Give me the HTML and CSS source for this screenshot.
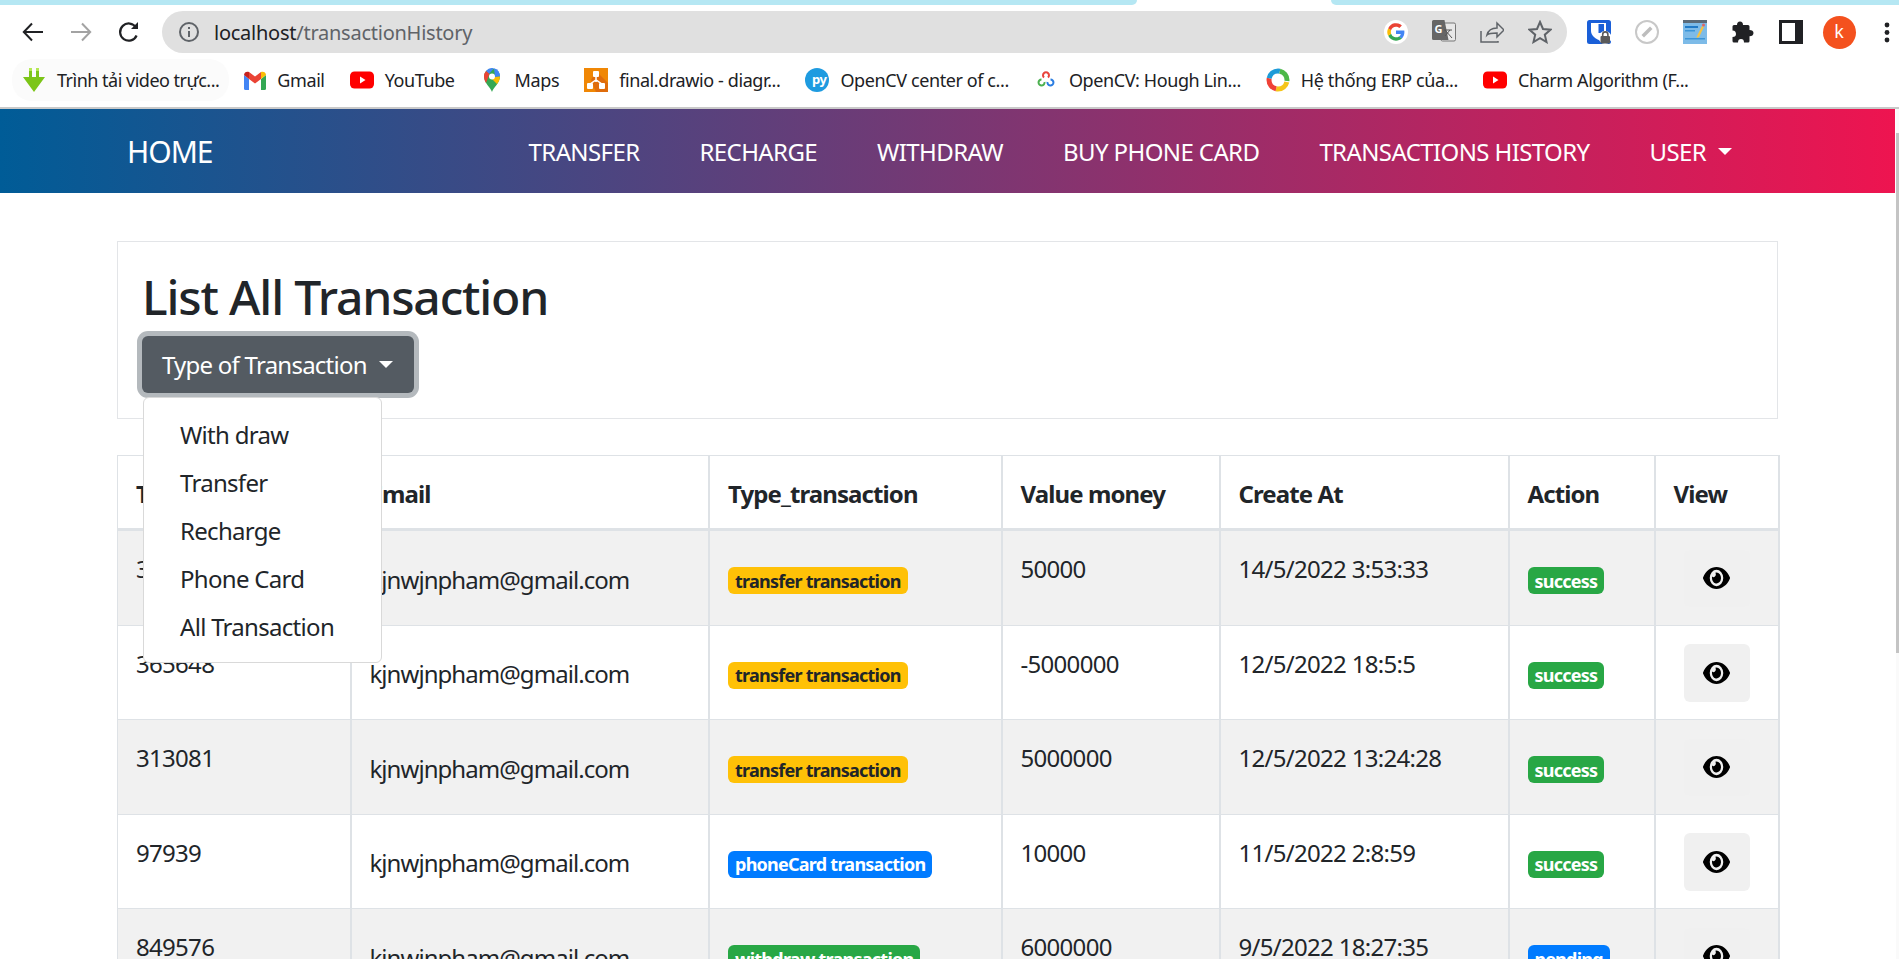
FILE: index.html
```html
<!DOCTYPE html>
<html lang="en">

<head>
    <meta charset="UTF-8">
    <meta name="viewport" content="width=device-width, initial-scale=1.0">
    <title>Transaction History</title>
    <link rel="stylesheet" href="styles.css">
</head>

<body>
    <svg class="defs" aria-hidden="true">
        <symbol id="eye" viewBox="0 64 576 384" preserveAspectRatio="none">
            <path d="M572.52 241.4C518.29 135.59 410.93 64 288 64S57.68 135.64 3.48 241.41a32.35 32.35 0 0 0 0 29.19C57.71 376.41 165.07 448 288 448s230.32-71.64 284.52-177.41a32.35 32.35 0 0 0 0-29.19zM288 400a144 144 0 1 1 144-144 143.93 143.93 0 0 1-144 144zm0-240a95.31 95.31 0 0 0-25.31 3.79 47.85 47.85 0 0 1-66.9 66.9A95.78 95.78 0 1 0 288 160z" />
        </symbol>
        <symbol id="yt" viewBox="0 0 24 24">
            <rect x="0" y="3.500" width="24" height="17" rx="4.500" fill="#f00" />
            <path d="M10 8.500v7l5.500-3.500z" fill="#fff" />
        </symbol>
    </svg>

    <!-- browser chrome -->
    <div class="tabstrip">
        <div class="tab-bg tab-bg-left"></div>
        <div class="tab-active"></div>
        <div class="tab-bg tab-bg-right"></div>
    </div>

    <div class="toolbar">
        <div class="tool-btn">
            <svg width="22" height="22" viewBox="0 0 22 22" fill="none" stroke="#202124" stroke-width="2"><path d="M21 11H2M10 2.500 1.800 11l8.200 8.500" /></svg>
        </div>
        <div class="tool-btn">
            <svg width="22" height="22" viewBox="0 0 22 22" fill="none" stroke="#a3a3a3" stroke-width="2"><path d="M1 11h19M12 2.500l8.200 8.500-8.200 8.500" /></svg>
        </div>
        <div class="tool-btn">
            <svg width="22" height="22" viewBox="0 0 22 22" fill="none" stroke="#202124" stroke-width="2.200"><path d="M18.600 14.500a8.600 8.600 0 1 1-.6-8" /><path d="M20 1v7h-7z" fill="#202124" stroke="none" /></svg>
        </div>

        <div class="address-bar">
            <svg class="info-icon" width="20" height="20" viewBox="0 0 20 20" fill="none" stroke="#5f6368" stroke-width="2"><circle cx="10" cy="10" r="9" /><path d="M10 9v6M10 5v2" /></svg>
            <div class="url"><span class="url-host">localhost</span>/transactionHistory</div>
            <div class="bar-icons">
                <svg width="24" height="24" viewBox="0 0 24 24"><circle cx="12" cy="12" r="12" fill="#fff" /><g transform="translate(-2.400 -2.400) scale(1.200)"><path d="M19 12.300c0-.6 0-1-.1-1.500H12v2.800h4a3.400 3.400 0 0 1-1.500 2.200l2.300 1.800c1.400-1.300 2.200-3.200 2.200-5.300z" fill="#4285f4" /><path d="M12 19.200c1.900 0 3.500-.6 4.800-1.700l-2.300-1.800a4.400 4.400 0 0 1-6.600-2.300L5.500 15.200a7.200 7.200 0 0 0 6.500 4z" fill="#34a853" /><path d="M7.900 13.400a4.400 4.400 0 0 1 0-2.800L5.500 8.800a7.200 7.200 0 0 0 0 6.400z" fill="#fbbc05" /><path d="M12 7.600c1.100 0 2 .4 2.800 1.100l2.100-2.100A7.200 7.200 0 0 0 5.500 8.800l2.400 1.800A4.300 4.300 0 0 1 12 7.600z" fill="#ea4335" /></g></svg>
                <svg width="24" height="24" viewBox="0 0 24 24"><rect x="9" y="3" width="14.500" height="18" rx="1.500" fill="#e8e8e8" stroke="#777" /><path d="M1.500 0h11l4 20h-15A1.500 1.500 0 0 1 0 18.500v-17A1.500 1.500 0 0 1 1.500 0z" fill="#666" /><text class="g-letter" x="2.500" y="13">G</text><path d="M13 10l7 8M13 16l5-6M12 10h8" stroke="#555" fill="none" /></svg>
                <svg width="24" height="24" viewBox="0 0 24 24" fill="none" stroke="#5f6368" stroke-width="1.500"><path d="M1 11v11h17v-1M7 15c1-4 4-7 10-7V3l7 7-7 7v-4c-5 0-8 0-10 2z" /></svg>
                <svg width="24" height="24" viewBox="0 0 24 24" fill="none" stroke="#5f6368" stroke-width="2"><path d="M12 2l3 7 7.500.7-5.700 5 1.700 7.300-6.500-3.900L5.500 22l1.700-7.300-5.700-5L9 9z" /></svg>
            </div>
        </div>

        <div class="ext-icons">
            <svg width="24" height="24" viewBox="0 0 24 24"><rect width="24" height="24" rx="2.500" fill="#1a5fd8" /><path d="M4 3h15v11c-2 3-5 5-7.500 6C8 18.500 4 15 4 11z" fill="#fff" /><rect x="11.500" y="4" width="5.500" height="9" fill="#1a5fd8" /><circle cx="18" cy="17.500" r="6.500" fill="#fff" /><rect x="13.500" y="16" width="9.500" height="7.500" rx="1" fill="#5a5a5a" /><path d="M15.700 16.500v-2a2.600 2.600 0 0 1 5.200 0v2" fill="none" stroke="#5a5a5a" stroke-width="1.600" /></svg>
            <svg width="24" height="24" viewBox="0 0 24 24" fill="none"><circle cx="12" cy="12" r="11" fill="#fff" stroke="#c8c8c8" stroke-width="2" /><path d="M6.500 15 15 6.500l2.500 2.500L9 17.500z" fill="#bdbdbd" /></svg>
            <svg width="24" height="24" viewBox="0 0 24 24"><rect width="24" height="24" fill="#7dbbe8" /><rect width="24" height="3" fill="#5a6a78" /><rect x="2" y="6" width="13" height="2" fill="#1f7ac8" /><rect x="2" y="10" width="10" height="1.500" fill="#3b95d8" /><rect x="2" y="18" width="20" height="1.500" fill="#3b95d8" /><path d="M14 16l5-10 2 1-5 10-2.500 1z" fill="#f5c242" /><circle cx="20.500" cy="5" r="1.500" fill="#e06666" /></svg>
            <svg width="24" height="24" viewBox="0 0 24 24" fill="#202124"><path d="M9 1.500c2 0 3 1.300 3 3.500h5a1.500 1.500 0 0 1 1.500 1.500V10c2.500 0 4 1 4 3s-1.500 3.300-4 3.300V21a1.500 1.500 0 0 1-1.500 1.500h-4c0-2.500-1-3.500-3-3.500s-3 1-3 3.500H3A1.500 1.500 0 0 1 1.500 21v-4c2.500 0 3.500-1.300 3.500-3S4 10.500 1.500 10.500v-4A1.500 1.500 0 0 1 3 5h3c0-2.200 1-3.500 3-3.500z" /></svg>
            <svg width="24" height="24" viewBox="0 0 24 24"><rect x="1.500" y="1.500" width="21" height="21" fill="#fff" stroke="#202124" stroke-width="3" /><rect x="16" y="1.500" width="6" height="21" fill="#202124" /></svg>
            <div class="avatar">k</div>
            <svg class="dots" width="6" height="24" viewBox="0 0 6 24" fill="#202124"><circle cx="3" cy="5" r="2.400" /><circle cx="3" cy="12.500" r="2.400" /><circle cx="3" cy="20" r="2.400" /></svg>
        </div>
    </div>

    <div class="bookmarks">
        <div class="bookmark bookmark-hover">
            <svg width="24" height="24" viewBox="0 0 24 24"><path d="M7 0h3v9h4V0h3v9h6L12 24 1 9h6z" fill="#7cc518" /><path d="M7 0h3v3H7zM14 0h3v3h-3z" fill="#b5e853" /></svg>
            <span class="bookmark-tight">Trình tải video trực...</span>
        </div>
        <div class="bookmark">
            <svg width="22" height="24" viewBox="0 0 22 24"><path d="M0 7v13.500A1.500 1.500 0 0 0 1.500 22H5V11z" fill="#4285f4" /><path d="M22 7v13.500a1.500 1.500 0 0 1-1.500 1.500H17V11z" fill="#34a853" /><path d="M5 11l6 4.500 6-4.500V4l-6 4.500L5 4z" fill="#ea4335" /><path d="M0 7c0-3 3-4 5-3v7z" fill="#c5221f" /><path d="M22 7c0-3-3-4-5-3v7z" fill="#fbbc04" /></svg>
            <span>Gmail</span>
        </div>
        <div class="bookmark">
            <svg width="24" height="24"><use href="#yt" /></svg>
            <span>YouTube</span>
        </div>
        <div class="bookmark">
            <svg width="24" height="24" viewBox="0 0 24 24"><path d="M12 24c-1-4-8-9-8-15.500a8 8 0 0 1 16 0C20 15 13 20 12 24z" fill="#34a853" /><path d="M6 3a8 8 0 0 1 8-2.700L9 6z" fill="#4285f4" /><path d="M4 8.500A8 8 0 0 1 6 3l3.500 3L6 15a12 12 0 0 1-2-6.500z" fill="#ea4335" /><path d="M14 .300A8 8 0 0 1 20 8.500L15 9z" fill="#4285f4" /><path d="M20 8.500c0 3-1.500 5.500-3 7.500l-5-5 3-2z" fill="#fbbc04" /><circle cx="12" cy="8.500" r="3" fill="#fff" /></svg>
            <span>Maps</span>
        </div>
        <div class="bookmark">
            <svg width="24" height="24" viewBox="0 0 24 24"><rect width="24" height="24" fill="#f08705" /><path d="M24 24H12L7 12l5-9 12 12z" fill="#df6c0c" /><path d="M12 8v6M6 16l6-4 6 4" stroke="#fff" stroke-width="1.500" fill="none" /><rect x="9" y="3" width="6" height="6" rx="1" fill="#fff" /><rect x="3" y="15" width="6" height="6" rx="1" fill="#fff" /><rect x="15" y="15" width="6" height="6" rx="1" fill="#fff" /></svg>
            <span>final.drawio - diagr...</span>
        </div>
        <div class="bookmark">
            <svg width="24" height="24" viewBox="0 0 24 24"><circle cx="12" cy="12" r="12" fill="#1e9be0" /><text class="py-letter" x="7" y="16">py</text></svg>
            <span>OpenCV center of c...</span>
        </div>
        <div class="bookmark">
            <svg width="24" height="24" viewBox="0 0 24 24" fill="none" stroke-width="2"><path d="M10 9.500a3 3 0 1 1 4 0" stroke="#e8453c" /><path d="M10.500 14a3 3 0 1 1-3-2.500" stroke="#4bb04f" /><path d="M13.500 14a3 3 0 1 0 3-2.500" stroke="#2a7de1" /></svg>
            <span>OpenCV: Hough Lin...</span>
        </div>
        <div class="bookmark">
            <svg width="24" height="24" viewBox="0 0 24 24" fill="none" stroke-width="5"><circle cx="12" cy="12" r="9" stroke="#f5c518" stroke-dasharray="14 43" stroke-dashoffset="-2" /><circle cx="12" cy="12" r="9" stroke="#ef4136" stroke-dasharray="14 43" stroke-dashoffset="-16" /><circle cx="12" cy="12" r="9" stroke="#1d9bd8" stroke-dasharray="14 43" stroke-dashoffset="-30" /><circle cx="12" cy="12" r="9" stroke="#4cb848" stroke-dasharray="14 43" stroke-dashoffset="-44" /></svg>
            <span>Hệ thống ERP của...</span>
        </div>
        <div class="bookmark">
            <svg width="24" height="24"><use href="#yt" /></svg>
            <span>Charm Algorithm (F...</span>
        </div>
    </div>

    <div class="scrollbar">
        <div class="scrollbar-thumb"></div>
    </div>

    <!-- page -->
    <nav class="navbar">
        <a class="brand">HOME</a>
        <ul class="nav-links">
            <li>TRANSFER</li>
            <li>RECHARGE</li>
            <li>WITHDRAW</li>
            <li>BUY PHONE CARD</li>
            <li>TRANSACTIONS HISTORY</li>
            <li class="nav-user">USER<span class="caret"></span></li>
        </ul>
    </nav>

    <main class="content">
        <section class="title-card">
            <h1>List All Transaction</h1>
            <div class="dropdown">
                <button class="dropdown-btn">Type of Transaction<span class="caret"></span></button>
                <div class="dropdown-menu">
                    <div class="dropdown-item">With draw</div>
                    <div class="dropdown-item">Transfer</div>
                    <div class="dropdown-item">Recharge</div>
                    <div class="dropdown-item">Phone Card</div>
                    <div class="dropdown-item">All Transaction</div>
                </div>
            </div>
        </section>

        <table class="history-table">
            <colgroup>
                <col class="col-id">
                <col class="col-email">
                <col class="col-type">
                <col class="col-money">
                <col class="col-date">
                <col class="col-action">
                <col class="col-view">
            </colgroup>
            <thead>
                <tr>
                    <th>Transaction ID</th>
                    <th>Email</th>
                    <th>Type_transaction</th>
                    <th>Value money</th>
                    <th>Create At</th>
                    <th>Action</th>
                    <th>View</th>
                </tr>
            </thead>
            <tbody>
                <tr>
                    <td>320517</td>
                    <td class="email">kjnwjnpham@gmail.com</td>
                    <td class="mid"><span class="badge badge-warning">transfer transaction</span></td>
                    <td>50000</td>
                    <td>14/5/2022 3:53:33</td>
                    <td class="mid"><span class="badge badge-success">success</span></td>
                    <td class="view"><button class="view-btn"><svg width="27" height="22"><use href="#eye" /></svg></button></td>
                </tr>
                <tr>
                    <td>365648</td>
                    <td class="email">kjnwjnpham@gmail.com</td>
                    <td class="mid"><span class="badge badge-warning">transfer transaction</span></td>
                    <td>-5000000</td>
                    <td>12/5/2022 18:5:5</td>
                    <td class="mid"><span class="badge badge-success">success</span></td>
                    <td class="view"><button class="view-btn"><svg width="27" height="22"><use href="#eye" /></svg></button></td>
                </tr>
                <tr>
                    <td>313081</td>
                    <td class="email">kjnwjnpham@gmail.com</td>
                    <td class="mid"><span class="badge badge-warning">transfer transaction</span></td>
                    <td>5000000</td>
                    <td>12/5/2022 13:24:28</td>
                    <td class="mid"><span class="badge badge-success">success</span></td>
                    <td class="view"><button class="view-btn"><svg width="27" height="22"><use href="#eye" /></svg></button></td>
                </tr>
                <tr>
                    <td>97939</td>
                    <td class="email">kjnwjnpham@gmail.com</td>
                    <td class="mid"><span class="badge badge-primary">phoneCard transaction</span></td>
                    <td>10000</td>
                    <td>11/5/2022 2:8:59</td>
                    <td class="mid"><span class="badge badge-success">success</span></td>
                    <td class="view"><button class="view-btn"><svg width="27" height="22"><use href="#eye" /></svg></button></td>
                </tr>
                <tr>
                    <td>849576</td>
                    <td class="email">kjnwjnpham@gmail.com</td>
                    <td class="mid"><span class="badge badge-success">withdraw transaction</span></td>
                    <td>6000000</td>
                    <td>9/5/2022 18:27:35</td>
                    <td class="mid"><span class="badge badge-primary">pending</span></td>
                    <td class="view"><button class="view-btn"><svg width="27" height="22"><use href="#eye" /></svg></button></td>
                </tr>
            </tbody>
        </table>
    </main>
</body>

</html>
```

FILE: styles.css
```css
html,
body {
    height: 100%;
    overflow: hidden;
}

body {
    margin: 0;
    padding-right: 4px;
    box-sizing: border-box;
    position: relative;
    background-color: #fff;
    color: #212529;
    font-family: "Noto Sans", Arial, sans-serif;
    font-size: 24px;
    line-height: 36px;
    letter-spacing: -0.7px;
}

.defs {
    display: none;
}

/* browser chrome */
.tabstrip {
    display: flex;
    height: 5px;
    margin-right: -4px;
}

.tab-bg {
    background-color: #b5e7f3;
}

.tab-bg-left {
    width: 1137px;
    border-bottom-right-radius: 6px;
}

.tab-active {
    width: 194px;
}

.tab-bg-right {
    flex: 1;
    border-bottom-left-radius: 6px;
}

.toolbar {
    display: flex;
    align-items: center;
    height: 53px;
    padding: 1px 0 0 9px;
    box-sizing: border-box;
    margin-right: -4px;
}

.tool-btn {
    width: 48px;
    display: flex;
    justify-content: center;
}

.address-bar {
    display: flex;
    align-items: center;
    width: 1405px;
    height: 42px;
    margin-left: 9px;
    padding: 0 15px 0 17px;
    box-sizing: border-box;
    border-radius: 21px;
    background-color: #e0e0e0;
}

.url {
    flex: 1;
    margin-left: 15px;
    padding-top: 2px;
    font-size: 20px;
    line-height: 40px;
    letter-spacing: -0.25px;
    color: #5f6368;
}

.url-host {
    color: #202124;
}

.bar-icons,
.ext-icons {
    display: flex;
    align-items: center;
    gap: 24px;
}

.ext-icons {
    margin-left: 20px;
}

.g-letter {
    font-size: 11px;
    font-weight: 700;
    fill: #fff;
}

.avatar {
    width: 33px;
    height: 33px;
    margin: 0 -4.5px;
    border-radius: 50%;
    background-color: #f4511e;
    color: #fff;
    font-size: 18px;
    line-height: 31px;
    letter-spacing: 0;
    text-align: center;
}

.dots {
    margin-left: 9px;
}

.bookmarks {
    display: flex;
    align-items: center;
    gap: 25px;
    height: 51px;
    padding: 0 0 6px 22px;
    box-sizing: border-box;
    margin-right: -4px;
    border-bottom: 2px solid #c9c9c9;
    font-size: 18px;
    letter-spacing: -0.4px;
    color: #202124;
}

.bookmark {
    display: flex;
    align-items: center;
    gap: 11px;
    white-space: nowrap;
}

.bookmark-hover {
    border-radius: 20px;
    background-color: #fbfbfb;
    margin: 0 -10px;
    padding: 3px 10px;
}

.bookmark-tight {
    letter-spacing: -0.5px;
}

.py-letter {
    font-size: 13px;
    font-weight: 700;
    fill: #fff;
}

.scrollbar {
    position: absolute;
    top: 109px;
    right: 0;
    bottom: 0;
    width: 3px;
    background-color: #fafafa;
}

.scrollbar-thumb {
    height: 520px;
    margin-top: 24px;
    background-color: #c4c4c4;
}

/* page */
.navbar {
    display: flex;
    align-items: center;
    height: 84px;
    padding: 2px 0 0 127px;
    box-sizing: border-box;
    background: linear-gradient(to right, #005c97, #ee1450);
    color: #fff;
    letter-spacing: -0.6px;
}

.brand {
    font-size: 30px;
    letter-spacing: -1px;
}

.nav-links {
    display: flex;
    gap: 60px;
    margin: 0 0 0 316px;
    padding: 0;
    list-style: none;
}

.caret {
    display: inline-block;
    margin-left: 12px;
    vertical-align: 6px;
    border-top: 7px solid currentColor;
    border-left: 7.5px solid transparent;
    border-right: 7.5px solid transparent;
}

.content {
    padding: 48px 117px 0;
}

.title-card {
    padding: 19px 24px 25px;
    border: 1.5px solid #e3e5e8;
}

h1 {
    margin: 0 0 3px;
    font-size: 48px;
    font-weight: 500;
    line-height: 72px;
    letter-spacing: -1.15px;
}

.dropdown {
    position: relative;
    display: inline-block;
}

.dropdown-btn {
    display: block;
    height: 57px;
    padding: 0 21px 0 20px;
    border: 0;
    border-radius: 6px;
    background-color: #545b62;
    box-shadow: 0 0 0 5px #b4b9bd;
    color: #fff;
    font: inherit;
    letter-spacing: -0.76px;
}

.dropdown-menu {
    position: absolute;
    top: 61px;
    left: 1px;
    z-index: 10;
    width: 239px;
    padding: 12px 0;
    box-sizing: border-box;
    border: 1.5px solid #d9d9d9;
    border-radius: 6px;
    background-color: #fff;
}

.dropdown-item {
    padding: 7px 36px 5px;
}

.history-table {
    width: 100%;
    margin-top: 36px;
    table-layout: fixed;
    border-collapse: collapse;
}

.col-id { width: 233px; }
.col-email { width: 358.5px; }
.col-type { width: 292.5px; }
.col-money { width: 218px; }
.col-date { width: 289px; }
.col-action { width: 146px; }
.col-view { width: 124px; }

th,
td {
    padding: 20px 18px 16px;
    border: 2px solid #dee2e6;
    text-align: left;
    vertical-align: top;
}

td {
    border-width: 1px 2px 1px 1px;
    white-space: nowrap;
}

th {
    border-width: 1px 2px 3px 1px;
    font-weight: 700;
    font-size: 24px;
    letter-spacing: -0.9px;
}

tbody tr:nth-child(odd) {
    background-color: #f1f1f1;
}

td.email {
    vertical-align: middle;
    letter-spacing: -0.95px;
}

td.mid {
    padding: 19px 18px 17px;
    vertical-align: middle;
}

td.view {
    padding: 18.5px 18px 17.5px;
    vertical-align: middle;
    text-align: center;
}

.badge {
    display: inline-block;
    padding: 4.5px 7px;
    border-radius: 6px;
    font-size: 18px;
    font-weight: 700;
    line-height: 18px;
    letter-spacing: -0.75px;
    vertical-align: baseline;
}

.badge-warning {
    background-color: #ffc107;
    color: #212529;
}

.badge-success {
    background-color: #28a745;
    color: #fff;
}

.badge-primary {
    background-color: #007bff;
    color: #fff;
}

.view-btn {
    width: 66px;
    height: 57.5px;
    padding: 3px 0 0;
    border: 0;
    border-radius: 6px;
    background-color: #f0f0f0;
    vertical-align: middle;
}
```
